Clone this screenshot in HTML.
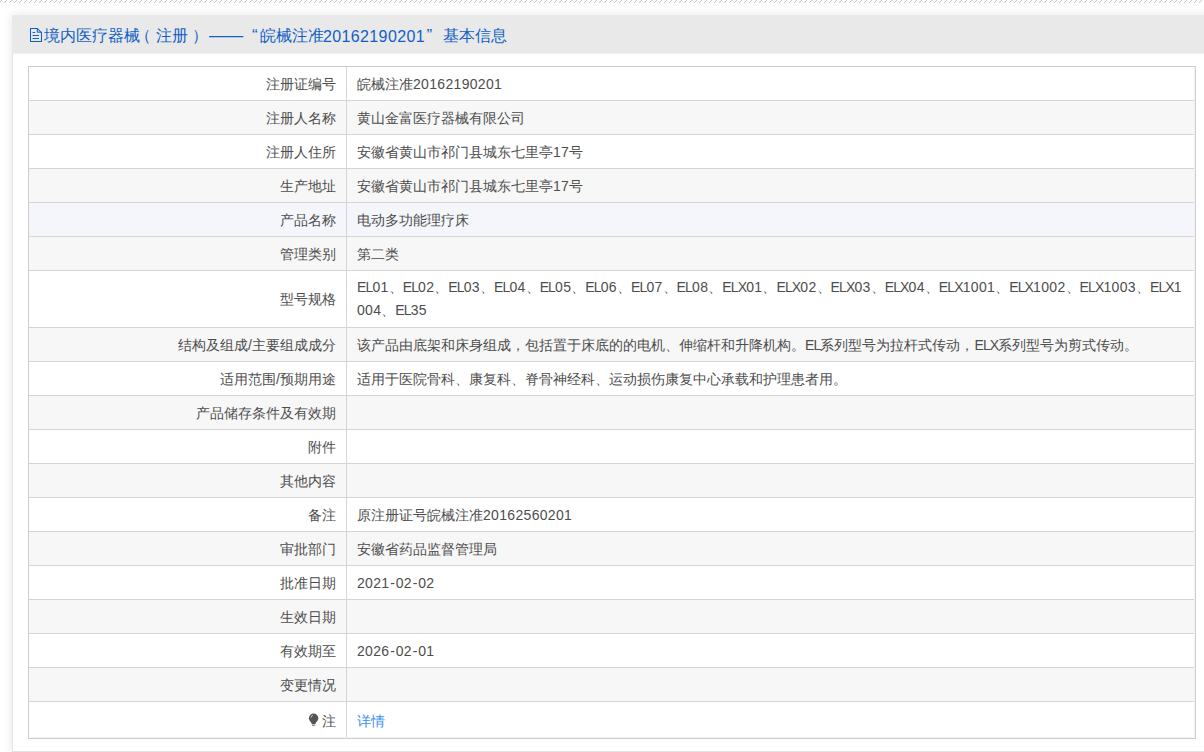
<!DOCTYPE html>
<html><head><meta charset="utf-8">
<style>
*{margin:0;padding:0;box-sizing:border-box}
html,body{width:1204px;height:752px;overflow:hidden;background:#fff;font-family:"Liberation Sans",sans-serif;}
.hatch{position:absolute;left:0;top:0;display:block;shape-rendering:crispEdges}
.panel{position:absolute;left:12px;top:15px;width:1204px;height:737px;background:#fff;
 border-left:1px solid #e4e4e4;border-bottom:1px solid #e4e4e4;box-shadow:0 0 10px rgba(0,0,0,0.1);}
.hd{position:absolute;left:12px;top:15px;width:1192px;height:38px;background:#e9e9e9;border-bottom:1px solid #efeff4;box-sizing:content-box}
.ttl{position:absolute;top:26px;height:20px;line-height:20px;font-size:16px;color:#115fc6;white-space:nowrap;}
.ico{position:absolute;left:29px;top:27px;}
.tbo{position:absolute;left:28px;top:66px;width:1168px;height:673px;border:1px solid #cdcdcd;}
.bg{position:absolute;left:29px;width:1165px;}
.hl{position:absolute;left:29px;width:1165px;height:1px;background:#d5d5d5;}
.vl{position:absolute;left:346px;top:67px;width:1px;height:671px;background:#d5d5d5;}
.lt{position:absolute;right:868px;font-size:14px;color:#4d4d4d;white-space:nowrap;line-height:20px;}
.vt{position:absolute;left:357px;font-size:14px;color:#4d4d4d;white-space:nowrap;line-height:20px;}
.d{letter-spacing:0.32px}
.u{letter-spacing:-0.85px}
.hy{margin:0 0.8px}
.bulb{display:inline-block;width:12px;height:14px;vertical-align:-2px;}
.bulb svg{display:block}
</style></head><body>
<svg class="hatch" width="1204" height="3"><defs><pattern id="hp" width="5" height="3" patternUnits="userSpaceOnUse"><rect x="1" y="0" width="1" height="1" fill="#c4c4c4"/><rect x="0" y="1" width="1" height="1" fill="#c4c4c4"/><rect x="4" y="2" width="1" height="1" fill="#c4c4c4"/></pattern></defs><rect width="1204" height="3" fill="url(#hp)"/></svg>
<div class="panel"></div>
<div class="hd"></div>
<svg class="ico" width="14" height="16" viewBox="0 0 14 16"><path d="M1.5 1.5H8.3L12.5 5.7V14.5H1.5Z" fill="none" stroke="#115fc6" stroke-width="1.05"/><path d="M8.3 1.5V5.2H12.5" fill="none" stroke="#115fc6" stroke-width="1"/><path d="M3.6 5.5H6.2M3.6 8.5H10M3.6 11.5H10" stroke="#115fc6" stroke-width="1.05"/></svg>
<div class="ttl" style="left:43.5px">境内医疗器械</div>
<div class="ttl" style="left:134.5px">（</div>
<div class="ttl" style="left:155.5px">注册</div>
<div class="ttl" style="left:192px">）</div>
<div class="ttl" style="left:208.5px;transform:scaleX(1.07);transform-origin:0 0">——</div>
<div class="ttl" style="left:252px;font-size:17px">“</div>
<div class="ttl" style="left:259.5px">皖械注准</div>
<div class="ttl" style="left:323px;top:27px;letter-spacing:0.37px">20162190201</div>
<div class="ttl" style="left:426.5px;font-size:17px">”</div>
<div class="ttl" style="left:442.5px">基本信息</div>
<div class="tbo"></div>
<div class="bg" style="top:67px;height:33px;background:#fff"></div>
<div class="hl" style="top:100px"></div>
<div class="lt" style="top:74px">注册证编号</div>
<div class="vt" style="top:74px">皖械注准<span class="d">20162190201</span></div>
<div class="bg" style="top:101px;height:33px;background:#f7f7f7"></div>
<div class="hl" style="top:134px"></div>
<div class="lt" style="top:108px">注册人名称</div>
<div class="vt" style="top:108px">黄山金富医疗器械有限公司</div>
<div class="bg" style="top:135px;height:33px;background:#fff"></div>
<div class="hl" style="top:168px"></div>
<div class="lt" style="top:142px">注册人住所</div>
<div class="vt" style="top:142px">安徽省黄山市祁门县城东七里亭<span class="d">17</span>号</div>
<div class="bg" style="top:169px;height:33px;background:#f7f7f7"></div>
<div class="hl" style="top:202px"></div>
<div class="lt" style="top:176px">生产地址</div>
<div class="vt" style="top:176px">安徽省黄山市祁门县城东七里亭<span class="d">17</span>号</div>
<div class="bg" style="top:203px;height:33px;background:#f4f6fb"></div>
<div class="hl" style="top:236px"></div>
<div class="lt" style="top:210px">产品名称</div>
<div class="vt" style="top:210px">电动多功能理疗床</div>
<div class="bg" style="top:237px;height:33px;background:#f7f7f7"></div>
<div class="hl" style="top:270px"></div>
<div class="lt" style="top:244px">管理类别</div>
<div class="vt" style="top:244px">第二类</div>
<div class="bg" style="top:271px;height:56px;background:#fff"></div>
<div class="hl" style="top:327px"></div>
<div class="lt" style="top:288.5px">型号规格</div>
<div class="vt ml" style="top:277px"><span class="u">EL</span><span class="d">01</span>、<span class="u">EL</span><span class="d">02</span>、<span class="u">EL</span><span class="d">03</span>、<span class="u">EL</span><span class="d">04</span>、<span class="u">EL</span><span class="d">05</span>、<span class="u">EL</span><span class="d">06</span>、<span class="u">EL</span><span class="d">07</span>、<span class="u">EL</span><span class="d">08</span>、<span class="u">ELX</span><span class="d">01</span>、<span class="u">ELX</span><span class="d">02</span>、<span class="u">ELX</span><span class="d">03</span>、<span class="u">ELX</span><span class="d">04</span>、<span class="u">ELX</span><span class="d">1001</span>、<span class="u">ELX</span><span class="d">1002</span>、<span class="u">ELX</span><span class="d">1003</span>、<span class="u">ELX</span><span class="d">1</span></div>
<div class="vt" style="top:300px"><span class="d">004</span>、<span class="u">EL</span><span class="d">35</span></div>
<div class="bg" style="top:328px;height:33px;background:#f7f7f7"></div>
<div class="hl" style="top:361px"></div>
<div class="lt" style="top:335px">结构及组成/主要组成成分</div>
<div class="vt" style="top:335px">该产品由底架和床身组成，包括置于床底的的电机、伸缩杆和升降机构。<span class="u">EL</span>系列型号为拉杆式传动，<span class="u">ELX</span>系列型号为剪式传动。</div>
<div class="bg" style="top:362px;height:33px;background:#fff"></div>
<div class="hl" style="top:395px"></div>
<div class="lt" style="top:369px">适用范围/预期用途</div>
<div class="vt" style="top:369px">适用于医院骨科、康复科、脊骨神经科、运动损伤康复中心承载和护理患者用。</div>
<div class="bg" style="top:396px;height:33px;background:#f7f7f7"></div>
<div class="hl" style="top:429px"></div>
<div class="lt" style="top:403px">产品储存条件及有效期</div>
<div class="bg" style="top:430px;height:33px;background:#fff"></div>
<div class="hl" style="top:463px"></div>
<div class="lt" style="top:437px">附件</div>
<div class="bg" style="top:464px;height:33px;background:#f7f7f7"></div>
<div class="hl" style="top:497px"></div>
<div class="lt" style="top:471px">其他内容</div>
<div class="bg" style="top:498px;height:33px;background:#fff"></div>
<div class="hl" style="top:531px"></div>
<div class="lt" style="top:505px">备注</div>
<div class="vt" style="top:505px">原注册证号皖械注准<span class="d">20162560201</span></div>
<div class="bg" style="top:532px;height:33px;background:#f7f7f7"></div>
<div class="hl" style="top:565px"></div>
<div class="lt" style="top:539px">审批部门</div>
<div class="vt" style="top:539px">安徽省药品监督管理局</div>
<div class="bg" style="top:566px;height:33px;background:#fff"></div>
<div class="hl" style="top:599px"></div>
<div class="lt" style="top:573px">批准日期</div>
<div class="vt" style="top:573px"><span class="d">2021</span><span class="hy">-</span><span class="d">02</span><span class="hy">-</span><span class="d">02</span></div>
<div class="bg" style="top:600px;height:33px;background:#f7f7f7"></div>
<div class="hl" style="top:633px"></div>
<div class="lt" style="top:607px">生效日期</div>
<div class="bg" style="top:634px;height:33px;background:#fff"></div>
<div class="hl" style="top:667px"></div>
<div class="lt" style="top:641px">有效期至</div>
<div class="vt" style="top:641px"><span class="d">2026</span><span class="hy">-</span><span class="d">02</span><span class="hy">-</span><span class="d">01</span></div>
<div class="bg" style="top:668px;height:33px;background:#f7f7f7"></div>
<div class="hl" style="top:701px"></div>
<div class="lt" style="top:675px">变更情况</div>
<div class="bg" style="top:702px;height:36px;background:#fff"></div>
<svg class="bulbs" style="position:absolute;left:308px;top:713px" width="12" height="14" viewBox="0 0 12 14"><circle cx="5.6" cy="5.3" r="4.7" fill="#555"/><path d="M2.6 8.2 L8.6 8.2 L7.4 10.9 L3.8 10.9Z" fill="#555"/><rect x="3.9" y="11.5" width="3.4" height="1.4" fill="#888"/><path d="M2.9 4.6 C3.1 3.5 3.8 2.7 4.8 2.4" stroke="#ddd" stroke-width="0.9" fill="none"/></svg>
<div class="lt" style="top:711px">注</div>
<div class="vt" style="top:711px;color:#3a8ef0">详情</div>
<div class="vl"></div>
<div style="position:absolute;left:1194px;top:67px;width:1px;height:671px;background:#f2f4fa"></div>
<div style="position:absolute;left:29px;top:737px;width:1166px;height:1px;background:#f2f4fa"></div>
</body></html>
